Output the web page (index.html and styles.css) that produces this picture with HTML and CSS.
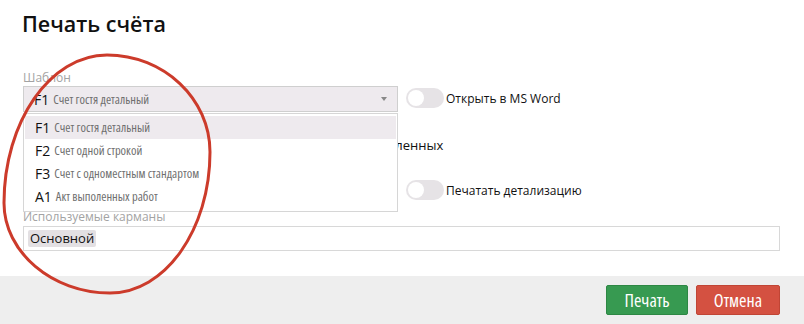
FILE: index.html
```html
<!DOCTYPE html>
<html lang="ru">
<head>
  <meta charset="UTF-8">
  <title>Печать счёта</title>
  <link rel="stylesheet" href="styles.css">
</head>
<body>
<div class="dialog">
  <h2 class="title">Печать счёта</h2>

  <div class="form">
    <div class="cell">
      <div class="label">Шаблон</div>
      <div class="select">
        <span class="code">F1</span><span class="name">Счет гостя детальный</span>
        <span class="caret"></span>
      </div>
      <!-- open dropdown list -->
      <ul class="dropdown">
        <li class="active"><span class="code">F1</span><span class="name">Счет гостя детальный</span></li>
        <li><span class="code">F2</span><span class="name">Счет одной строкой</span></li>
        <li><span class="code">F3</span><span class="name">Счет с одноместным стандартом</span></li>
        <li><span class="code">A1</span><span class="name">Акт выполенных работ</span></li>
      </ul>
    </div>
    <div class="cell toggle-cell first">
      <span class="toggle"></span><span class="toggle-text">Открыть в MS Word</span>
    </div>

    <div class="cell toggle-cell under">
      <span class="toggle"></span>
    </div>
    <div class="cell toggle-cell under">
      <!-- label mostly covered by the open list -->
      <span class="toggle-text behind">выделенных</span>
    </div>

    <div class="cell toggle-cell third"></div>
    <div class="cell toggle-cell third">
      <span class="toggle"></span><span class="toggle-text">Печатать детализацию</span>
    </div>

    <div class="cell wide">
      <div class="label">Используемые карманы</div>
      <div class="tags"><span class="tag">Основной</span></div>
    </div>
  </div>
</div>

<div class="footer">
  <button class="btn btn-ok">Печать</button>
  <button class="btn btn-cancel">Отмена</button>
</div>

<!-- hand-drawn highlight over the list -->
<svg class="circle" width="804" height="324" viewBox="0 0 804 324">
  <path d="M107 55 C164 55 210 99 210 152 C210 230 165 293 110 293 C52 293 4 252 4 203 C4 122 50 55 107 55 Z" fill="none" stroke="#cc3b2b" stroke-width="3"/>
</svg>
</body>
</html>
```

FILE: styles.css
```css
body {
  margin: 0;
  background-color: #fff;
  color: #111;
  font-family: "Open Sans", "Noto Sans", sans-serif;
  font-size: 13px;
}
.dialog {
  padding: 8px 24px 0 23px;
  height: 268px;
}
.title {
  margin: 0 0 0 -1px;
  font-size: 21.5px;
  font-weight: 600;
  line-height: 32px;
}
.form {
  margin-top: 30px;
  display: grid;
  grid-template-columns: 375px 1fr;
  column-gap: 8px;
}
.cell {
  position: relative;
}
.wide {
  grid-column: 1 / 3;
}
.label {
  color: #a3a3a3;
  font-size: 12px;
  line-height: 15px;
}
.select {
  display: flex;
  align-items: center;
  height: 24px;
  margin-top: 1px;
  padding: 0 10px;
  background-color: #eeeaee;
  border: 1px solid #cfcfcf;
}
.code {
  font-size: 14px;
  color: #111;
  margin-right: 4px;
}
.name {
  font-size: 12.5px;
  font-stretch: 75%;
  color: #6f6f6f;
}
.caret {
  margin-left: auto;
  border-left: 3px solid transparent;
  border-right: 3px solid transparent;
  border-top: 4px solid #888;
}
.dropdown {
  position: absolute;
  top: 43px;
  left: 0;
  right: 0;
  margin: 0;
  padding: 2px 1px 3px;
  list-style: none;
  background-color: #fff;
  border: 1px solid #d6d6d6;
  z-index: 2;
}
.dropdown li {
  display: flex;
  align-items: center;
  height: 23px;
  padding: 0 10px;
}
.dropdown li.active {
  background-color: #eeeaee;
}
.toggle-cell {
  display: flex;
  align-items: center;
  height: 22px;
}
.first {
  align-self: end;
  margin-bottom: 3px;
}
.under {
  margin-top: 22px;
}
.under:first-of-type {
  margin-left: -4px;
}
.third {
  margin-top: 23px;
}
.toggle-text.behind {
  font-size: 13px;
  margin-left: -43px;
}
.toggle {
  position: relative;
  width: 38px;
  height: 20px;
  border-radius: 10px;
  background-color: #e6e3e6;
  margin-right: 2px;
  flex: none;
}
.toggle::after {
  content: "";
  position: absolute;
  left: 2px;
  top: 2px;
  width: 16px;
  height: 16px;
  border-radius: 50%;
  background-color: #fff;
}
.toggle-text {
  font-size: 12px;
  white-space: nowrap;
}
.form > .cell.wide:last-child {
  margin-top: 8px;
}
.tags {
  margin-top: 2px;
  height: 21px;
  border: 1px solid #d8d8d8;
  padding: 2px 4px 0;
}
.tag {
  display: inline-block;
  padding: 0 2px;
  height: 17px;
  line-height: 17px;
  font-size: 13px;
  color: #111;
  background-color: #e3e0e3;
  border-radius: 2px;
}
.footer {
  height: 48px;
  background-color: #eeeeee;
  display: flex;
  justify-content: flex-end;
  align-items: center;
  gap: 8px;
  padding-right: 24px;
}
.btn {
  height: 30px;
  padding: 0 6px;
  font-family: inherit;
  font-size: 18px;
  font-stretch: 75%;
  color: #fff;
  border-radius: 2px;
  cursor: pointer;
}
.btn-ok {
  width: 82px;
  background-color: #379a51;
  border: 1px solid #2d8744;
}
.btn-cancel {
  width: 84px;
  background-color: #d45141;
  border: 1px solid #c04535;
}
.circle {
  position: absolute;
  left: 0;
  top: 0;
  z-index: 3;
  pointer-events: none;
}
```
